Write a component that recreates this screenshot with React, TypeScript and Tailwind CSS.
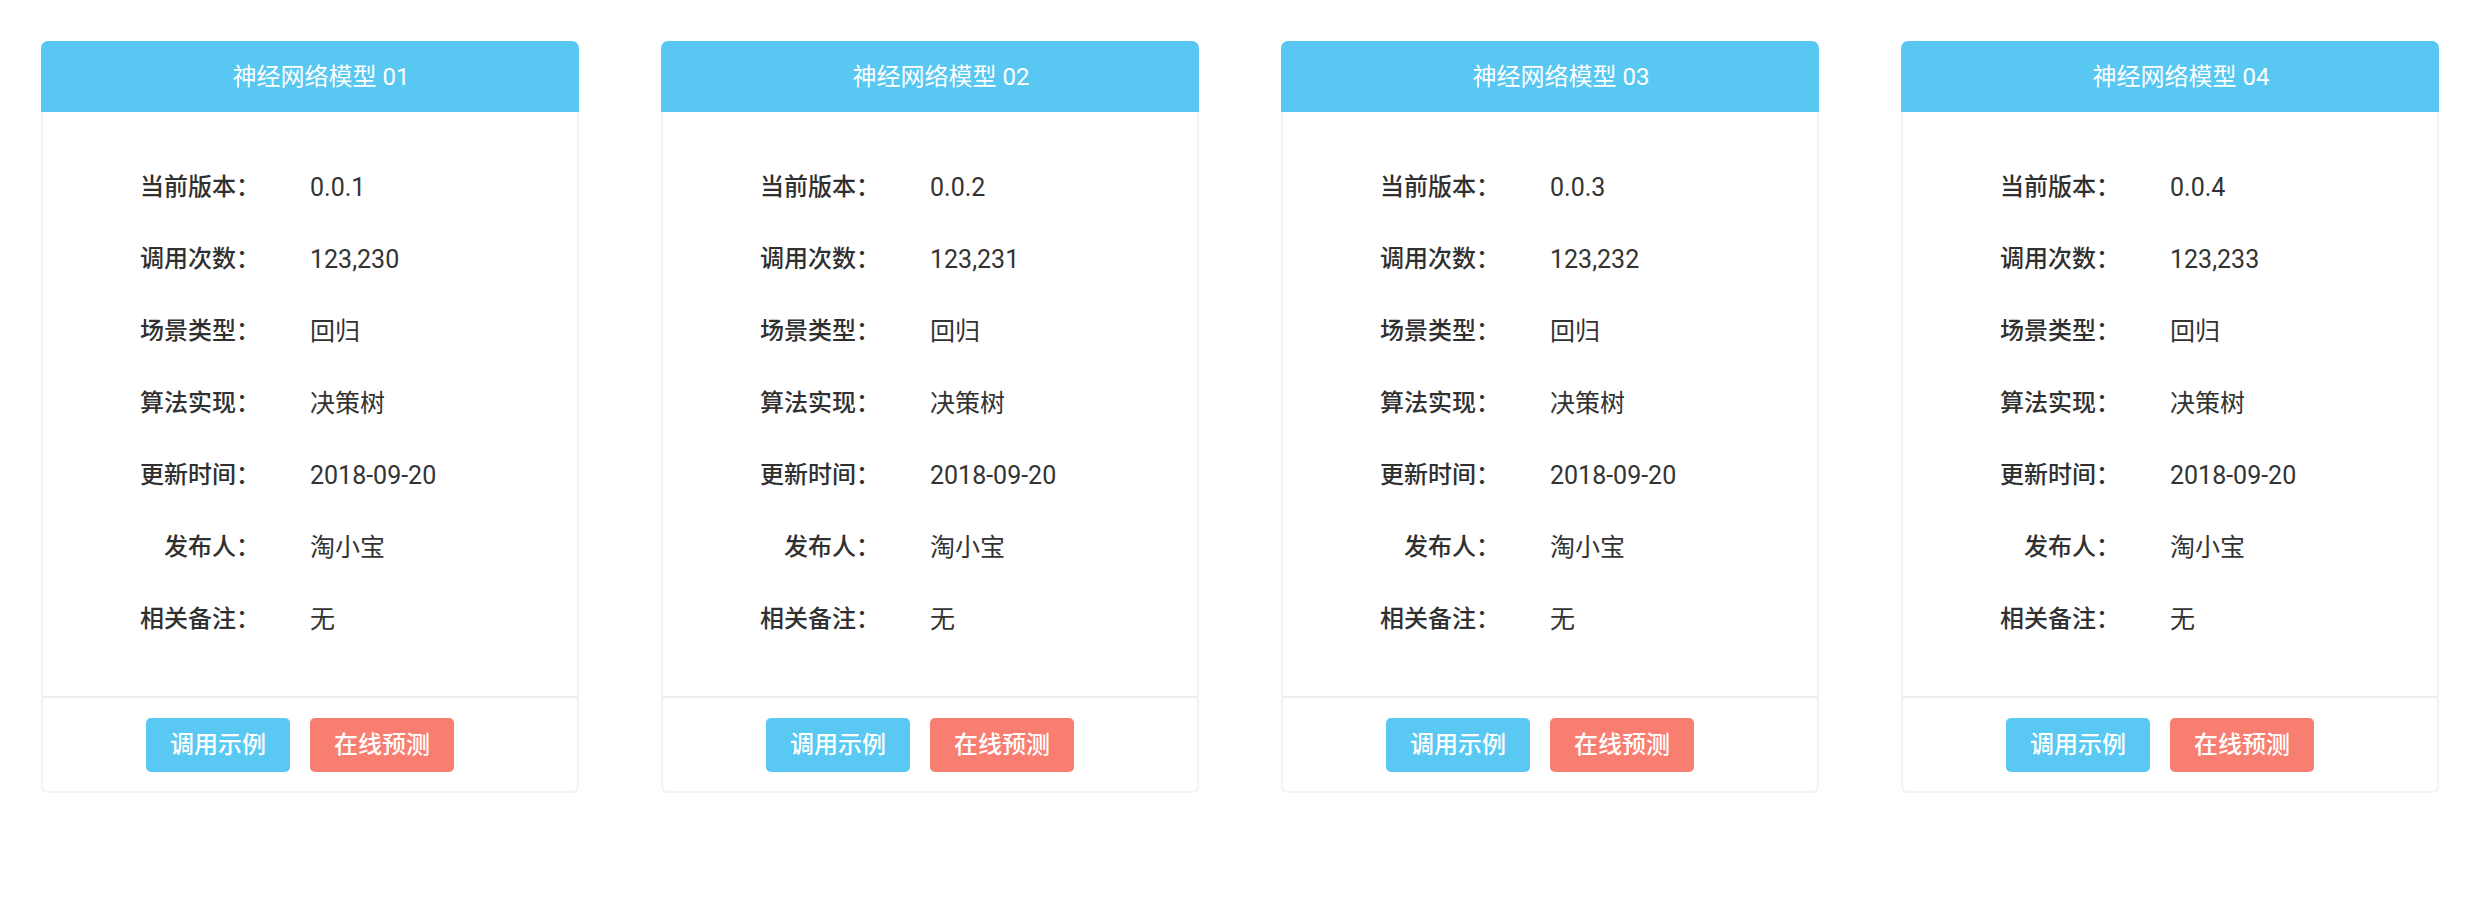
import React from "react";

type Model = {
  id: string;
  version: string;
  calls: string;
};

const models: Model[] = [
  { id: "01", version: "0.0.1", calls: "123,230" },
  { id: "02", version: "0.0.2", calls: "123,231" },
  { id: "03", version: "0.0.3", calls: "123,232" },
  { id: "04", version: "0.0.4", calls: "123,233" },
];

function InfoRow({ label, value }: { label: string; value: string }) {
  return (
    <div className="flex items-center h-[72px]">
      <span className="w-[217px] text-right font-medium text-[#303030]">
        {label}：
      </span>
      <span className="ml-[50px] text-[25px] text-[#333333]">{value}</span>
    </div>
  );
}

function ModelCard({ model }: { model: Model }) {
  const rows: [string, string][] = [
    ["当前版本", model.version],
    ["调用次数", model.calls],
    ["场景类型", "回归"],
    ["算法实现", "决策树"],
    ["更新时间", "2018-09-20"],
    ["发布人", "淘小宝"],
    ["相关备注", "无"],
  ];

  return (
    <div className="border-2 border-[#f2f2f2] rounded-[7px] bg-white">
      {/* Header */}
      <div className="-mx-[2px] -mt-[2px] h-[71px] pl-[22px] rounded-t-[7px] bg-[#58c8f2] flex items-center justify-center text-white">
        神经网络模型 {model.id}
      </div>

      {/* Info list */}
      <div className="pt-[39px] pb-[41px]">
        {rows.map(([label, value]) => (
          <InfoRow key={label} label={label} value={value} />
        ))}
      </div>

      {/* Actions */}
      <div className="border-t-2 border-[#ececec] pt-[20px] pb-[19px] flex justify-center">
        <button className="h-[54px] w-[144px] mr-[20px] rounded-[5px] bg-[#59c9f3] text-white font-medium">
          调用示例
        </button>
        <button className="h-[54px] w-[144px] mr-[20px] rounded-[5px] bg-[#f87e72] text-white font-medium">
          在线预测
        </button>
      </div>
    </div>
  );
}

export default function App() {
  return (
    <div
      className="w-[2480px] h-[914px] bg-white pt-[41px] text-[24px] leading-none"
      style={{ fontFamily: 'Roboto, "Noto Sans CJK SC", sans-serif' }}
    >
      <div className="grid grid-cols-4">
        {models.map((m) => (
          <div key={m.id} className="px-[41px]">
            <ModelCard model={m} />
          </div>
        ))}
      </div>
    </div>
  );
}
